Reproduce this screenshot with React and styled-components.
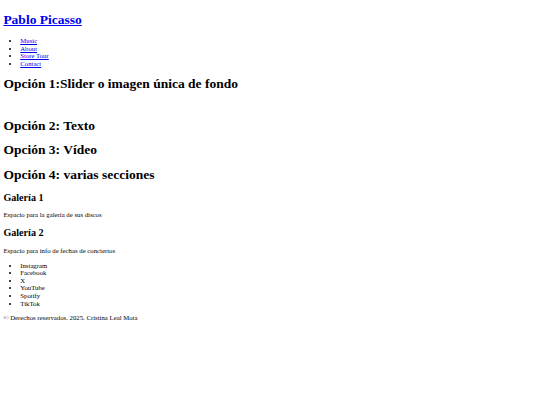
import React from 'react';
import styled, { createGlobalStyle } from 'styled-components';

// the reference is a plain unstyled page photographed at 1280px and scaled to 540px,
// so every default size is multiplied by 0.421875 (line heights follow Chrome's rounded metrics)
const GlobalStyle = createGlobalStyle`
  html, body {
    background: #ffffff;
  }
  body {
    margin: 3.375px;
    font-family: "Liberation Serif", "Times New Roman", serif;
    font-size: 6.75px;
    line-height: 7.594px;
    color: #000000;
  }
`;

const Title = styled.h1`
  font-size: 2em;
  line-height: 15.61px;
  font-weight: bold;
  margin: 0.67em 0;
`;

const Link = styled.a`
  color: #0000ee;
  text-decoration: underline;
`;

const List = styled.ul`
  margin: 1em 0;
  padding-left: 16.875px;
  list-style: disc;
`;

const Section = styled.section`
  margin: 0;
`;

const Blank = styled.p`
  margin: 1em 0;
`;

const SubHeading = styled.h2`
  font-size: 1.5em;
  line-height: 11.39px;
  font-weight: bold;
  margin: 0.83em 0;
`;

const Text = styled.p`
  margin: 1em 0;
`;

const navItems = ['Music', 'About', 'Store Tour', 'Contact'];
const socials = ['Instagram', 'Facebook', 'X', 'YouTube', 'Spotify', 'TikTok'];

export default function App() {
  return (
    <>
      <GlobalStyle />
      <header>
        <Title>
          <Link href="#">Pablo Picasso</Link>
        </Title>
        <nav>
          <List>
            {navItems.map(item => (
              <li key={item}>
                <Link href="#">{item}</Link>
              </li>
            ))}
          </List>
        </nav>
      </header>
      <main>
        <Section>
          <Title>Opción 1:Slider o imagen única de fondo</Title>
          <Blank>&nbsp;</Blank>
        </Section>
        <Section>
          <Title>Opción 2: Texto</Title>
        </Section>
        <Section>
          <Title>Opción 3: Vídeo</Title>
        </Section>
        <Section>
          <Title>Opción 4: varias secciones</Title>
          <SubHeading>Galería 1</SubHeading>
          <Text>Espacio para la galería de sus discos</Text>
          <SubHeading>Galería 2</SubHeading>
          <Text>Espacio para info de fechas de conciertos</Text>
        </Section>
      </main>
      <footer>
        <List>
          {socials.map(item => (
            <li key={item}>{item}</li>
          ))}
        </List>
        <Text>© Derechos reservados. 2025. Cristina Leal Mota</Text>
      </footer>
    </>
  );
}
